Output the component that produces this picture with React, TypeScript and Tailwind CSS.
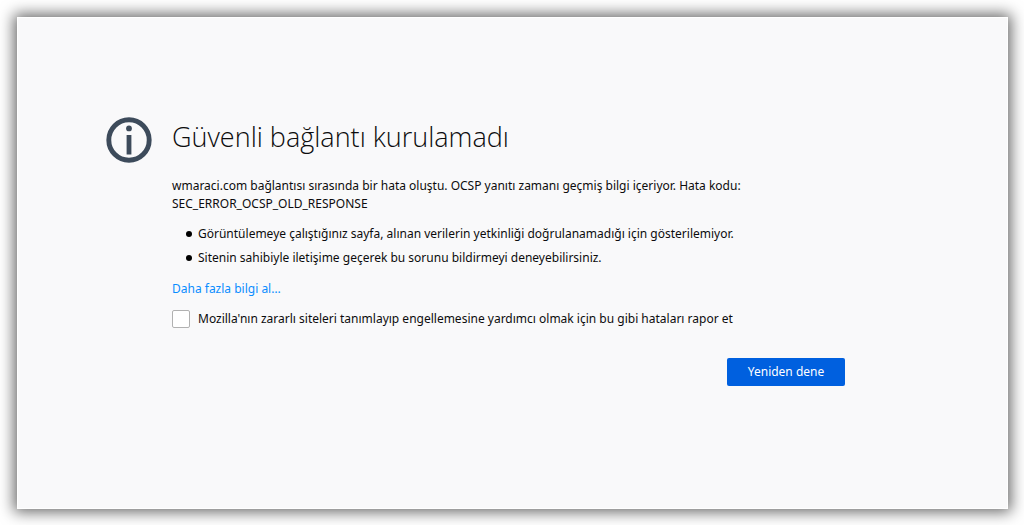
import { useState } from 'react';

const reasons = [
  'Görüntülemeye çalıştığınız sayfa, alınan verilerin yetkinliği doğrulanamadığı için gösterilemiyor.',
  'Sitenin sahibiyle iletişime geçerek bu sorunu bildirmeyi deneyebilirsiniz.',
];

function InfoIcon() {
  return (
    <svg viewBox="0 0 46 46" className="w-[46px] h-[46px] shrink-0" fill="none" aria-hidden="true">
      <circle cx="23" cy="23" r="20.2" stroke="#3d4b5b" strokeWidth="4.9" />
      <circle cx="23" cy="11.4" r="2.900" fill="#3d4b5b" />
      <rect x="20.600" y="18" width="4.800" height="19.500" fill="#3d4b5b" />
    </svg>
  );
}

export default function App() {
  const [report, setReport] = useState(false);

  return (
    <div className="min-h-screen flex bg-white pt-[17px] pl-[17px] pr-4 pb-4 text-[#0c0c0d] font-['Noto_Sans','Open_Sans',sans-serif]">
      <main className="flex-1 bg-[#f9f9fa] border border-white shadow-[0_0_14px_3px_rgba(0,0,0,0.6)] px-[88px] pt-[99px]">
        <div className="flex items-start gap-5 max-w-[739px]">
          <InfoIcon />
          <div className="flex-1">
            <h1 className="text-[27px] leading-10 font-light font-['Open_Sans',sans-serif]">Güvenli bağlantı kurulamadı</h1>
            <p className="mt-5 text-xs leading-[18px]">
              wmaraci.com bağlantısı sırasında bir hata oluştu. OCSP yanıtı zamanı geçmiş bilgi içeriyor. Hata kodu: SEC_ERROR_OCSP_OLD_RESPONSE
            </p>
            <ul className="mt-3 space-y-1.5 text-xs leading-[18px]">
              {reasons.map((reason) => (
                <li key={reason} className="flex items-center gap-1.5 pl-3.5">
                  <span className="w-1.5 h-1.5 shrink-0 rounded-full bg-black" />
                  {reason}
                </li>
              ))}
            </ul>
            <a href="#" className="block mt-[13px] text-xs leading-[18px] text-[#0a8dff]">
              Daha fazla bilgi al…
            </a>
            <label className="flex items-center gap-2 mt-3 text-xs leading-[18px]">
              <input
                type="checkbox"
                checked={report}
                onChange={(e) => setReport(e.target.checked)}
                className="w-[18px] h-[18px] shrink-0 appearance-none bg-white border border-[#b1b1b1] rounded-[2px] checked:bg-[#0060df]"
              />
              Mozilla'nın zararlı siteleri tanımlayıp engellemesine yardımcı olmak için bu gibi hataları rapor et
            </label>
            <div className="flex justify-end mt-[30px]">
              <button className="w-[118px] h-7 bg-[#0060df] hover:bg-[#003eaa] rounded-[2px] text-white text-xs">
                Yeniden dene
              </button>
            </div>
          </div>
        </div>
      </main>
    </div>
  );
}
